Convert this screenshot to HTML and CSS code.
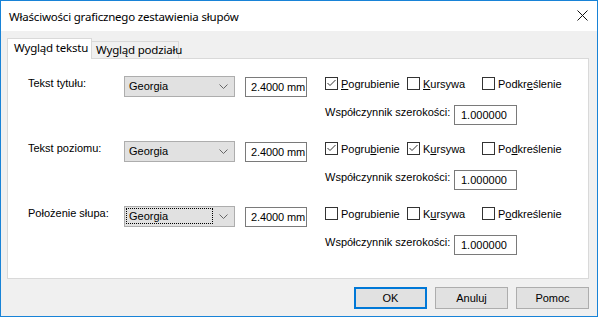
FILE: index.html
```html
<!DOCTYPE html>
<html lang="pl">

<head>
    <meta charset="UTF-8">
    <meta name="viewport" content="width=device-width, initial-scale=1.0">
    <title>Właściwości graficznego zestawienia słupów</title>
    <link rel="stylesheet" href="styles.css">
</head>

<body>
<div class="window">
    <!-- Title bar -->
    <div class="titlebar">
        <span class="title">Właściwości graficznego zestawienia słupów</span>
        <svg class="close" width="11" height="11" viewBox="0 0 11 11">
            <path d="M0.5 0.5 L10.5 10.5 M10.5 0.5 L0.5 10.5" stroke="#111" stroke-width="1" fill="none"/>
        </svg>
    </div>

    <div class="dialog">
        <!-- Tabs -->
        <div class="tabs">
            <div class="tab active">Wygląd tekstu</div>
            <div class="tab">Wygląd podziału</div>
        </div>

        <div class="panel">
            <!-- Tekst tytułu -->
            <div class="group">
                <div class="label">Tekst tytułu:</div>
                <div class="combo">
                    <span class="combo-value">Georgia</span>
                    <span class="combo-arrow">
                        <svg width="9" height="5" viewBox="0 0 9 5"><polyline points="0.5,0.5 4.5,4.5 8.5,0.5" fill="none" stroke="#666" stroke-width="1"/></svg>
                    </span>
                </div>
                <div class="field size">2.4000 mm</div>
                <div class="options">
                    <div class="checks">
                        <div class="check w1">
                            <span class="box on"><svg width="11" height="11" viewBox="0 0 11 11"><polyline points="1.5,5 4,7.5 9.5,2" fill="none" stroke="#333" stroke-width="1"/></svg></span>
                            <span><u>P</u>ogrubienie</span>
                        </div>
                        <div class="check w2">
                            <span class="box"></span>
                            <span><u>K</u>ursywa</span>
                        </div>
                        <div class="check">
                            <span class="box"></span>
                            <span>Podkr<u>e</u>ślenie</span>
                        </div>
                    </div>
                    <div class="factor">
                        <div class="factor-label">Współczynnik szerokości:</div>
                        <div class="field ratio">1.000000</div>
                    </div>
                </div>
            </div>

            <!-- Tekst poziomu -->
            <div class="group">
                <div class="label">Tekst poziomu:</div>
                <div class="combo">
                    <span class="combo-value">Georgia</span>
                    <span class="combo-arrow">
                        <svg width="9" height="5" viewBox="0 0 9 5"><polyline points="0.5,0.5 4.5,4.5 8.5,0.5" fill="none" stroke="#666" stroke-width="1"/></svg>
                    </span>
                </div>
                <div class="field size">2.4000 mm</div>
                <div class="options">
                    <div class="checks">
                        <div class="check w1">
                            <span class="box on"><svg width="11" height="11" viewBox="0 0 11 11"><polyline points="1.5,5 4,7.5 9.5,2" fill="none" stroke="#333" stroke-width="1"/></svg></span>
                            <span>Pogru<u>b</u>ienie</span>
                        </div>
                        <div class="check w2">
                            <span class="box on"><svg width="11" height="11" viewBox="0 0 11 11"><polyline points="1.5,5 4,7.5 9.5,2" fill="none" stroke="#333" stroke-width="1"/></svg></span>
                            <span>K<u>u</u>rsywa</span>
                        </div>
                        <div class="check">
                            <span class="box"></span>
                            <span>Po<u>d</u>kreślenie</span>
                        </div>
                    </div>
                    <div class="factor">
                        <div class="factor-label">Współczynnik szerokości:</div>
                        <div class="field ratio">1.000000</div>
                    </div>
                </div>
            </div>

            <!-- Położenie słupa -->
            <div class="group">
                <div class="label">Położenie słupa:</div>
                <div class="combo">
                    <span class="combo-value focused">Georgia</span>
                    <span class="combo-arrow">
                        <svg width="9" height="5" viewBox="0 0 9 5"><polyline points="0.5,0.5 4.5,4.5 8.5,0.5" fill="none" stroke="#666" stroke-width="1"/></svg>
                    </span>
                </div>
                <div class="field size">2.4000 mm</div>
                <div class="options">
                    <div class="checks">
                        <div class="check w1">
                            <span class="box"></span>
                            <span>Po<u>g</u>rubienie</span>
                        </div>
                        <div class="check w2">
                            <span class="box"></span>
                            <span>K<u>u</u>rsywa</span>
                        </div>
                        <div class="check">
                            <span class="box"></span>
                            <span>P<u>o</u>dkreślenie</span>
                        </div>
                    </div>
                    <div class="factor">
                        <div class="factor-label">Współczynnik szerokości:</div>
                        <div class="field ratio">1.000000</div>
                    </div>
                </div>
            </div>
        </div>

        <!-- Dialog buttons -->
        <div class="buttons">
            <div class="button default">OK</div>
            <div class="button">Anuluj</div>
            <div class="button">Pomoc</div>
        </div>
    </div>
</div>
</body>

</html>
```

FILE: styles.css
```css
body {
    margin: 0;
    padding: 0;
    font-family: 'Liberation Sans', Arial, sans-serif;
    font-size: 11px;
    color: #000;
    background-color: #fff;
    white-space: nowrap;
}

.window {
    width: 598px;
    height: 317px;
    box-sizing: border-box;
    border: 1px solid #1883d7;
    display: flex;
    flex-direction: column;
}

.titlebar {
    height: 30px;
    flex-shrink: 0;
    display: flex;
    align-items: center;
    justify-content: space-between;
    padding: 0 9px 0 8px;
    background-color: #fff;
}

.title {
    font-family: 'Noto Sans', sans-serif;
    font-size: 11.5px;
    letter-spacing: -0.2px;
    color: #000;
}

.close {
    margin-top: -1px;
}

.dialog {
    flex: 1;
    background-color: #f0f0f0;
    padding: 7px 8px 0 6px;
}

/* Tabs */
.tabs {
    display: flex;
    align-items: flex-end;
    margin-bottom: -1px;
}

.tab {
    font-family: 'Noto Sans', sans-serif;
    font-size: 11.5px;
    letter-spacing: -0.2px;
    box-sizing: border-box;
    border: 1px solid #d9d9d9;
    border-bottom: none;
    background-color: #f0f0f0;
    width: 87px;
    height: 17px;
    margin-bottom: 1px;
    border-left: none;
    padding-left: 4px;
    line-height: 15px;
}

.tab.active {
    position: relative;
    z-index: 1;
    width: 85px;
    height: 21px;
    margin-bottom: 0;
    border-left: 1px solid #d9d9d9;
    background-color: #fff;
    padding-left: 6px;
    line-height: 17px;
}

.panel {
    height: 221px;
    box-sizing: border-box;
    border: 1px solid #d9d9d9;
    background-color: #fff;
    padding: 17px 0 0 20px;
}

/* One row of settings */
.group {
    display: flex;
    align-items: flex-start;
    height: 65px;
}

.label {
    width: 96px;
    line-height: 13px;
    padding-top: 1px;
}

.combo {
    width: 111px;
    height: 21px;
    box-sizing: border-box;
    border: 1px solid #adadad;
    background-color: #e1e1e1;
    display: flex;
}

.combo-value {
    flex: 1;
    margin: 1px 0 2px 1px;
    padding-left: 2px;
    border: 1px dotted transparent;
    line-height: 15px;
}

.combo-value.focused {
    border-color: #000;
}

.combo-arrow {
    width: 21px;
    display: flex;
    align-items: center;
    justify-content: center;
}

.field {
    box-sizing: border-box;
    border: 1px solid #7a7a7a;
    background-color: #fff;
    height: 20px;
    line-height: 18px;
    overflow: hidden;
}

.field.size {
    width: 62px;
    margin: 1px 0 0 10px;
    padding-left: 5px;
    letter-spacing: -0.1px;
}

.options {
    margin-left: 18px;
}

.checks {
    display: flex;
    margin-top: 1px;
}

.check {
    display: flex;
    align-items: center;
    gap: 3px;
    height: 13px;
}

.check.w1 {
    width: 82px;
}

.check.w2 {
    width: 75px;
}

.box {
    width: 13px;
    height: 13px;
    box-sizing: border-box;
    border: 1px solid #333;
    background-color: #fff;
    display: flex;
}

.factor {
    display: flex;
    align-items: flex-start;
    margin-top: 15px;
}

.factor-label {
    width: 129px;
    line-height: 13px;
    margin-top: 1px;
}

.field.ratio {
    width: 63px;
    padding-left: 6px;
}

/* Bottom buttons */
.buttons {
    display: flex;
    justify-content: flex-end;
    gap: 8px;
    margin-top: 8px;
}

.button {
    width: 73px;
    height: 22px;
    box-sizing: border-box;
    border: 1px solid #adadad;
    background-color: #e1e1e1;
    text-align: center;
    line-height: 20px;
}

.button.default {
    border: 2px solid #0078d7;
    line-height: 18px;
}
```
